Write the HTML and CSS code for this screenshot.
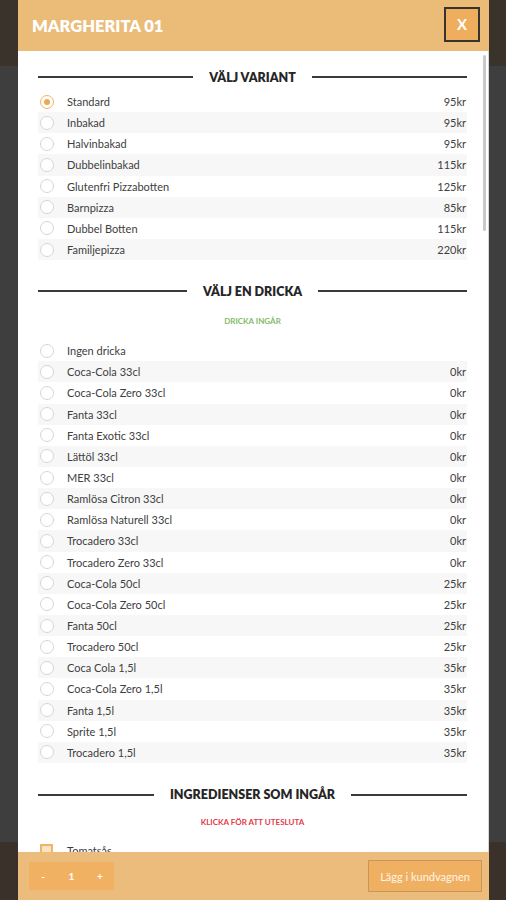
FILE: index.html
```html
<!DOCTYPE html>
<html>
<head>
<meta charset="utf-8">
<link rel="stylesheet" href="styles.css">
</head>
<body>
<div class="page">
  <div class="page-top"></div>
  <div class="page-main"></div>
  <div class="page-bottom"></div>
</div>

<div class="modal">
  <div class="modal-head">
    <h1 class="modal-title">MARGHERITA 01</h1>
    <button class="close">X</button>
  </div>
  <div class="modal-body">
    <div class="scroll-thumb"></div>
    <div class="section-title"><span class="line"></span><span class="st-text">VÄLJ VARIANT</span><span class="line"></span></div>
    <ul class="opts">
      <li class="opt"><span class="radio on"></span><span class="name">Standard</span><span class="price">95kr</span></li>
      <li class="opt"><span class="radio"></span><span class="name">Inbakad</span><span class="price">95kr</span></li>
      <li class="opt"><span class="radio"></span><span class="name">Halvinbakad</span><span class="price">95kr</span></li>
      <li class="opt"><span class="radio"></span><span class="name">Dubbelinbakad</span><span class="price">115kr</span></li>
      <li class="opt"><span class="radio"></span><span class="name">Glutenfri Pizzabotten</span><span class="price">125kr</span></li>
      <li class="opt"><span class="radio"></span><span class="name">Barnpizza</span><span class="price">85kr</span></li>
      <li class="opt"><span class="radio"></span><span class="name">Dubbel Botten</span><span class="price">115kr</span></li>
      <li class="opt"><span class="radio"></span><span class="name">Familjepizza</span><span class="price">220kr</span></li>
    </ul>

    <div class="section-title sec2"><span class="line"></span><span class="st-text">VÄLJ EN DRICKA</span><span class="line"></span></div>
    <p class="note green">DRICKA INGÅR</p>
    <ul class="opts">
      <li class="opt"><span class="radio"></span><span class="name">Ingen dricka</span><span class="price"></span></li>
      <li class="opt"><span class="radio"></span><span class="name">Coca-Cola 33cl</span><span class="price">0kr</span></li>
      <li class="opt"><span class="radio"></span><span class="name">Coca-Cola Zero 33cl</span><span class="price">0kr</span></li>
      <li class="opt"><span class="radio"></span><span class="name">Fanta 33cl</span><span class="price">0kr</span></li>
      <li class="opt"><span class="radio"></span><span class="name">Fanta Exotic 33cl</span><span class="price">0kr</span></li>
      <li class="opt"><span class="radio"></span><span class="name">Lättöl 33cl</span><span class="price">0kr</span></li>
      <li class="opt"><span class="radio"></span><span class="name">MER 33cl</span><span class="price">0kr</span></li>
      <li class="opt"><span class="radio"></span><span class="name">Ramlösa Citron 33cl</span><span class="price">0kr</span></li>
      <li class="opt"><span class="radio"></span><span class="name">Ramlösa Naturell 33cl</span><span class="price">0kr</span></li>
      <li class="opt"><span class="radio"></span><span class="name">Trocadero 33cl</span><span class="price">0kr</span></li>
      <li class="opt"><span class="radio"></span><span class="name">Trocadero Zero 33cl</span><span class="price">0kr</span></li>
      <li class="opt"><span class="radio"></span><span class="name">Coca-Cola 50cl</span><span class="price">25kr</span></li>
      <li class="opt"><span class="radio"></span><span class="name">Coca-Cola Zero 50cl</span><span class="price">25kr</span></li>
      <li class="opt"><span class="radio"></span><span class="name">Fanta 50cl</span><span class="price">25kr</span></li>
      <li class="opt"><span class="radio"></span><span class="name">Trocadero 50cl</span><span class="price">25kr</span></li>
      <li class="opt"><span class="radio"></span><span class="name">Coca Cola 1,5l</span><span class="price">35kr</span></li>
      <li class="opt"><span class="radio"></span><span class="name">Coca-Cola Zero 1,5l</span><span class="price">35kr</span></li>
      <li class="opt"><span class="radio"></span><span class="name">Fanta 1,5l</span><span class="price">35kr</span></li>
      <li class="opt"><span class="radio"></span><span class="name">Sprite 1,5l</span><span class="price">35kr</span></li>
      <li class="opt"><span class="radio"></span><span class="name">Trocadero 1,5l</span><span class="price">35kr</span></li>
    </ul>

    <div class="section-title sec3"><span class="line"></span><span class="st-text">INGREDIENSER SOM INGÅR</span><span class="line"></span></div>
    <p class="note red">KLICKA FÖR ATT UTESLUTA</p>
    <ul class="checks">
      <li class="check-row"><span class="checkbox"></span><span class="name">Tomatsås</span></li>
    </ul>
  </div>
  <div class="modal-foot">
    <div class="qty"><span class="qbtn">-</span><span class="qval">1</span><span class="qbtn">+</span></div>
    <button class="add">Lägg i kundvagnen</button>
  </div>
</div>
</body>
</html>
```
FILE: styles.css
```css
* { box-sizing: border-box; }
html, body { margin: 0; padding: 0; }
body {
  font-family: Lato, "Open Sans", Arial, sans-serif;
  background: #3d3d3d;
  width: 506px;
  height: 900px;
  overflow: hidden;
}
.page {
  height: 900px;
  display: flex;
  flex-direction: column;
}
.page-top { height: 66px; background: #3a332c; }
.page-main { flex: 1; background: #3e3e3e; }
.page-bottom { height: 58px; background: #3a322a; }

.modal {
  position: fixed;
  left: 18px;
  top: 0;
  width: 471px;
  height: 900px;
  display: flex;
  flex-direction: column;
  background: #fff;
}
.modal-head {
  height: 51px;
  background: #ebbb78;
  display: flex;
  align-items: center;
  justify-content: space-between;
  padding: 0 9px 0 14px;
  flex-shrink: 0;
}
.modal-title {
  margin: 0;
  color: #fff;
  font-size: 16.5px;
  font-weight: 800;
  letter-spacing: 0;
}
.close {
  width: 36px;
  height: 35px;
  margin-top: -3px;
  border: 2px solid #363430;
  background: #efad5e;
  color: #fff;
  font-family: Lato, sans-serif;
  font-weight: 700;
  font-size: 15px;
  padding: 0;
}
.modal-body {
  position: relative;
  flex: 1;
  overflow: hidden;
  padding: 16px 21px 0 20px;
  border-right: 1px solid #d8d8d8;
}
.scroll-thumb {
  position: absolute;
  right: 2px;
  top: 4px;
  width: 3px;
  height: 176px;
  background: #c9c9c9;
  border-radius: 2px;
}
.section-title {
  display: flex;
  align-items: center;
  height: 20px;
}
.line {
  flex: 1;
  height: 2px;
  background: #3a3a3a;
}
.st-text {
  margin: 0 16px;
  font-size: 12.5px;
  font-weight: 800;
  color: #262626;
}
.opts, .checks {
  list-style: none;
  margin: 4px 0 0;
  padding: 0;
}
.opt {
  display: flex;
  align-items: center;
  height: 21.15px;
  font-size: 11px;
  color: #404040;
  padding: 0 1px 0 2px;
}
.opt:nth-child(even) { background: #f7f7f7; }
.radio {
  width: 14px;
  height: 14px;
  border: 1px solid #d6d6d6;
  border-radius: 50%;
  background: #fff;
  margin-right: 13px;
  flex-shrink: 0;
  position: relative;
}
.radio.on { border-color: #f0b36a; }
.radio.on::after {
  content: "";
  position: absolute;
  left: 3px;
  top: 3px;
  width: 6px;
  height: 6px;
  border-radius: 50%;
  background: #f0a850;
}
.name { flex: 1; }
.price { text-align: right; }

.sec2 { margin-top: 21px; }
.sec3 { margin-top: 22px; }
.note {
  text-align: center;
  font-size: 8px;
  font-weight: 700;
}
.sec2 + .note { margin: 15px 0 0; }
.sec3 + .note { margin: 12px 0 0; }
.green { color: #82bb6a; }
.red { color: #e33a4c; }
.sec2 + .note + .opts { margin-top: 14px; }
.sec3 + .note + .checks { margin-top: 13px; }
.check-row {
  display: flex;
  align-items: center;
  height: 21px;
  font-size: 11px;
  color: #3a3a3a;
  padding-left: 2px;
}
.checkbox {
  width: 13px;
  height: 13px;
  border: 2px solid #f0b36a;
  background: #fbe2c0;
  margin-right: 14px;
}

.modal-foot {
  height: 48px;
  flex-shrink: 0;
  background: #ebbc7b;
  display: flex;
  align-items: center;
  justify-content: space-between;
  padding: 0 7px 0 11px;
}
.qty {
  display: flex;
  align-items: center;
  width: 85px;
  height: 28px;
  background: #f0b262;
  color: #fff;
  font-size: 10px;
  font-weight: 700;
}
.qbtn, .qval {
  flex: 1;
  text-align: center;
}
.add {
  width: 114px;
  height: 32px;
  background: #efb062;
  border: 1px solid #c8965a;
  color: #fff5e6;
  font-family: Lato, sans-serif;
  font-size: 11px;
  padding: 0;
}
```
